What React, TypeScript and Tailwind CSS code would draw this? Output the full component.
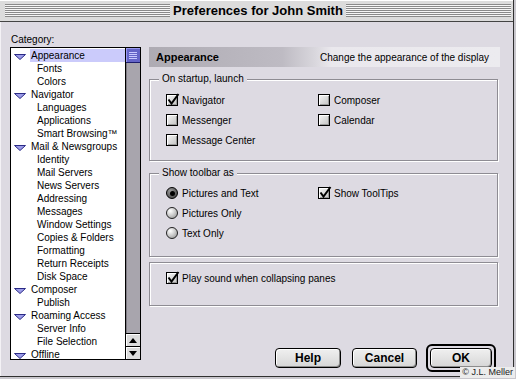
import React from "react";

type Item = { label: string; parent?: boolean; selected?: boolean };

const categories: Item[] = [
  { label: "Appearance", parent: true, selected: true },
  { label: "Fonts" },
  { label: "Colors" },
  { label: "Navigator", parent: true },
  { label: "Languages" },
  { label: "Applications" },
  { label: "Smart Browsing™" },
  { label: "Mail & Newsgroups", parent: true },
  { label: "Identity" },
  { label: "Mail Servers" },
  { label: "News Servers" },
  { label: "Addressing" },
  { label: "Messages" },
  { label: "Window Settings" },
  { label: "Copies & Folders" },
  { label: "Formatting" },
  { label: "Return Receipts" },
  { label: "Disk Space" },
  { label: "Composer", parent: true },
  { label: "Publish" },
  { label: "Roaming Access", parent: true },
  { label: "Server Info" },
  { label: "File Selection" },
  { label: "Offline", parent: true },
];

const Triangle = () => (
  <svg width="12" height="6" viewBox="0 0 12 6" className="mt-[5px] ml-[3px] shrink-0 self-start">
    <path d="M0.5 0.5 H11.5 L6 5.5 Z" fill="#9c9ce8" stroke="#2a2a86" strokeLinejoin="round" />
  </svg>
);

const Checkbox = ({ checked }: { checked?: boolean }) => (
  <span className="relative inline-block h-[12px] w-[12px] shrink-0 border border-black bg-[linear-gradient(135deg,#f6f6f6,#c2c2c2)] shadow-[inset_1px_1px_0_#ffffff,inset_-1px_-1px_0_#999999]">
    {checked && (
      <svg className="absolute -left-px -top-[2px]" width="14" height="14" viewBox="0 0 14 14">
        <path d="M2.5 6.5 L5.5 10.5 L12.5 1" fill="none" stroke="#000" strokeWidth="2" />
      </svg>
    )}
  </span>
);

const Radio = ({ checked }: { checked?: boolean }) =>
  checked ? (
    <span className="flex h-[12px] w-[12px] shrink-0 items-center justify-center rounded-full border border-black bg-[radial-gradient(circle_at_35%_30%,#9a9a9a,#3a3a3a)]">
      <span className="h-[5px] w-[5px] rounded-full bg-black" />
    </span>
  ) : (
    <span className="inline-block h-[12px] w-[12px] shrink-0 rounded-full border border-[#222] bg-[radial-gradient(circle_at_35%_30%,#ffffff,#cfcfcf_45%,#8e8e8e)]" />
  );

const Button = ({ label }: { label: string }) => (
  <button className="flex h-[20px] w-full items-center justify-center rounded-[4px] border border-black bg-[linear-gradient(#f0f0f0,#d6d6d6)] text-[12px] font-bold shadow-[inset_1px_1px_0_#ffffff,inset_-1px_-1px_0_#8c8c8c]">
    {label}
  </button>
);

const groupBox =
  "relative w-[349px] border border-[#8e8c93] shadow-[inset_1px_1px_0_#ffffff,1px_1px_0_#ffffff]";

export default function App() {
  return (
    <div className="h-[379px] w-[516px] overflow-hidden bg-[#c9c7cd] font-['Liberation_Sans',Arial,sans-serif] text-[10px] text-black">
      <div className="relative h-[377px] w-[514px] border-r border-b border-[#303030] bg-[#dddae2] shadow-[inset_1px_1px_0_#f4f2f6]">
        {/* title bar */}
        <div className="flex h-[22px] items-center border-b border-[#444] bg-[#dcdcdc] pl-[5px] pr-[2px] shadow-[inset_0_1px_0_#ffffff]">
          <div className="h-[13px] flex-1 bg-[repeating-linear-gradient(to_bottom,#8a8a8a_0px,#8a8a8a_1px,#f6f6f6_1px,#f6f6f6_2px)]" />
          <span className="px-[3px] text-[13px] leading-[14px] font-bold">Preferences for John Smith</span>
          <div className="h-[13px] flex-1 bg-[repeating-linear-gradient(to_bottom,#8a8a8a_0px,#8a8a8a_1px,#f6f6f6_1px,#f6f6f6_2px)]" />
        </div>

        <div className="flex">
          {/* category list */}
          <div className="mt-[11px] ml-[10px] w-[131px]">
            <div className="h-[14px] pl-[1px] leading-[13px]">Category:</div>
            <div className="flex h-[313px] border border-black bg-white">
              <div className="w-[114px] overflow-hidden pt-[1px]">
                {categories.map((c) => (
                  <div key={c.label} className="flex h-[13px] leading-[13px]">
                    {c.parent ? (
                      <>
                        <Triangle />
                        <span className={`ml-[4px] flex-1 pl-[1px] ${c.selected ? "bg-[#cbcbfb]" : ""}`}>
                          {c.label}
                        </span>
                      </>
                    ) : (
                      <span className="pl-[26px] whitespace-nowrap">{c.label}</span>
                    )}
                  </div>
                ))}
              </div>
              {/* scrollbar */}
              <div className="flex w-[15px] flex-col border-l border-black">
                <div className="flex h-[15px] flex-col items-center justify-center gap-[1px] border-b border-[#1e1e6e] bg-[#6464c8] shadow-[inset_1px_1px_0_#9a9af0]">
                  <span className="h-px w-[8px] bg-[#c8c8ff]" />
                  <span className="h-px w-[8px] bg-[#c8c8ff]" />
                  <span className="h-px w-[8px] bg-[#c8c8ff]" />
                  <span className="h-px w-[8px] bg-[#c8c8ff]" />
                </div>
                <div className="flex-1 bg-[#a8a5ad] shadow-[inset_1px_0_0_#7e7b83]" />
                <div className="flex h-[13px] items-center justify-center border-t border-black bg-[#dcdcdc] shadow-[inset_1px_1px_0_#ffffff]">
                  <svg width="8" height="5" viewBox="0 0 8 5">
                    <path d="M0 5 L4 0 L8 5 Z" fill="#000" />
                  </svg>
                </div>
                <div className="flex h-[13px] items-center justify-center border-t border-black bg-[#dcdcdc] shadow-[inset_1px_1px_0_#ffffff]">
                  <svg width="8" height="5" viewBox="0 0 8 5">
                    <path d="M0 0 L8 0 L4 5 Z" fill="#000" />
                  </svg>
                </div>
              </div>
            </div>
          </div>

          {/* right panel */}
          <div className="mt-[25px] ml-[8px] w-[351px]">
            <div className="flex h-[20px] items-center justify-between bg-[linear-gradient(to_right,#aeabb3,#bebbc3_38%,#d8d6dc_47%,#eae8ed_52%,#ecebef)]">
              <span className="pl-[7px] text-[11px] font-bold">Appearance</span>
              <span className="pr-[11px]">Change the appearance of the display</span>
            </div>

            <div className={`${groupBox} mt-[12px] h-[82px] pt-[10px] pl-[16px]`}>
              <span className="absolute -top-[8px] left-[9px] bg-[#dddae2] px-[3px] leading-[13px]">
                On startup, launch
              </span>
              <div className="grid grid-cols-[152px_1fr]">
                <div>
                  <label className="flex h-[20px] items-center gap-[4px]">
                    <Checkbox checked />
                    Navigator
                  </label>
                  <label className="flex h-[20px] items-center gap-[4px]">
                    <Checkbox />
                    Messenger
                  </label>
                  <label className="flex h-[20px] items-center gap-[4px]">
                    <Checkbox />
                    Message Center
                  </label>
                </div>
                <div>
                  <label className="flex h-[20px] items-center gap-[4px]">
                    <Checkbox />
                    Composer
                  </label>
                  <label className="flex h-[20px] items-center gap-[4px]">
                    <Checkbox />
                    Calendar
                  </label>
                </div>
              </div>
            </div>

            <div className={`${groupBox} mt-[12px] h-[84px] pt-[9px] pl-[16px]`}>
              <span className="absolute -top-[8px] left-[9px] bg-[#dddae2] px-[3px] leading-[13px]">
                Show toolbar as
              </span>
              <div className="grid grid-cols-[152px_1fr]">
                <div>
                  <label className="flex h-[20px] items-center gap-[4px]">
                    <Radio checked />
                    Pictures and Text
                  </label>
                  <label className="flex h-[20px] items-center gap-[4px]">
                    <Radio />
                    Pictures Only
                  </label>
                  <label className="flex h-[20px] items-center gap-[4px]">
                    <Radio />
                    Text Only
                  </label>
                </div>
                <div>
                  <label className="flex h-[20px] items-center gap-[4px]">
                    <Checkbox checked />
                    Show ToolTips
                  </label>
                </div>
              </div>
            </div>

            <div className={`${groupBox} mt-[5px] h-[44px] pt-[5px] pl-[16px]`}>
              <label className="flex h-[20px] items-center gap-[4px]">
                <Checkbox checked />
                Play sound when collapsing panes
              </label>
            </div>

            <div className="mt-[38px] flex items-center justify-end gap-[9px] pr-[4px]">
              <div className="flex gap-[11px]">
                <div className="w-[66px]">
                  <Button label="Help" />
                </div>
                <div className="w-[65px]">
                  <Button label="Cancel" />
                </div>
              </div>
              <div className="w-[70px] rounded-[6px] border-2 border-black bg-[#dddae2] p-[2px]">
                <Button label="OK" />
              </div>
            </div>
          </div>
        </div>

        <span className="absolute right-[-2px] bottom-[-2px] bg-[#ececec] px-[2px] text-[9px] leading-[11px] text-[#222]">
          © J.L. Meller
        </span>
      </div>
    </div>
  );
}
